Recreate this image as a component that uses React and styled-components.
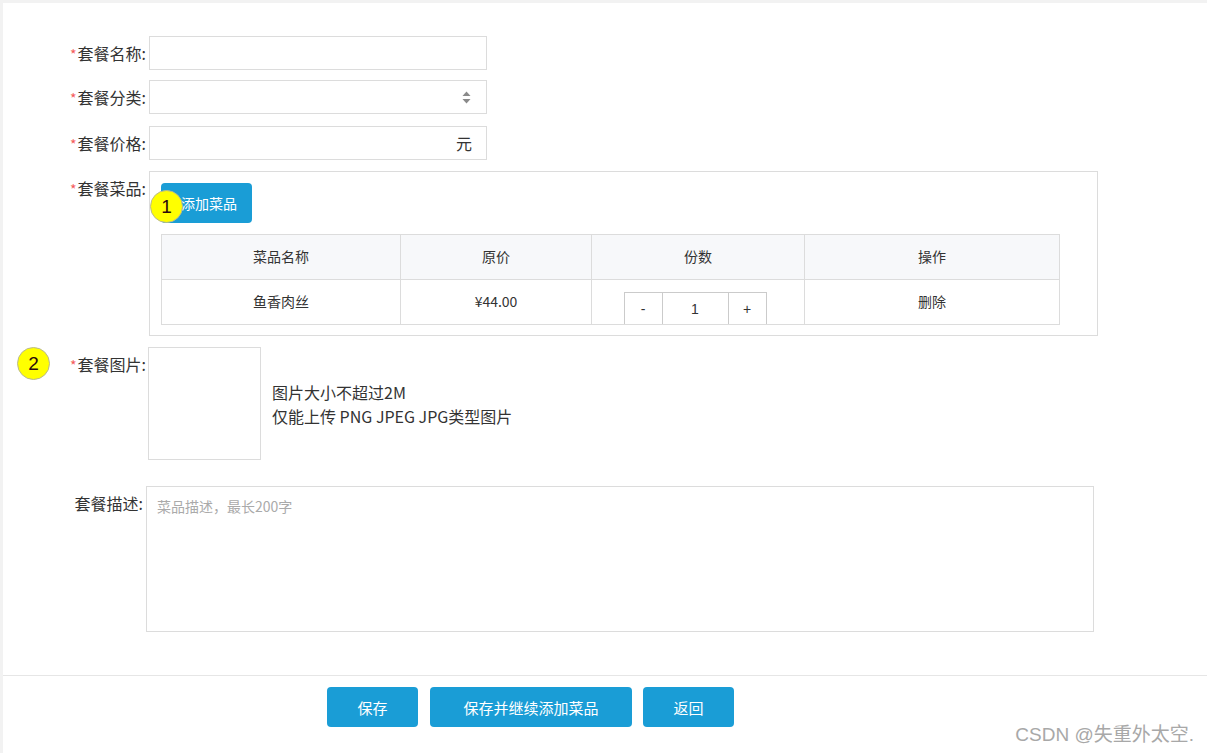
import React from "react";
import styled, { createGlobalStyle } from "styled-components";

const Global = createGlobalStyle`
  html, body { margin: 0; padding: 0; background: #f2f2f2; }
  body { font-family: "Noto Sans CJK SC", "Microsoft YaHei", "Liberation Sans", sans-serif; color: #333; }
  * { box-sizing: border-box; }
`;

const Panel = styled.div`
  position: relative;
  margin: 3px 0 0 3px;
  background: #fff;
  height: 750px;
  display: flex;
  flex-direction: column;
`;

const Form = styled.div`
  padding-top: 33px;
  flex: 1;
  display: flex;
  flex-direction: column;
`;

const Row = styled.div`
  position: relative;
  display: flex;
  align-items: flex-start;
  margin-bottom: ${(p) => p.$mb || 0}px;
`;

const Label = styled.label`
  width: ${(p) => p.$w || 143}px;
  margin-right: ${(p) => p.$gap || 3}px;
  text-align: right;
  font-size: 16px;
  line-height: 34px;
  height: 34px;
  color: #333;
  white-space: nowrap;
  flex-shrink: 0;
`;

const Star = styled.span`
  color: #f45b5b;
  font-size: 14px;
  margin-right: 1px;
`;

const InputBox = styled.div`
  width: 338px;
  height: 34px;
  border: 1px solid #dcdcdc;
  background: #fff;
  display: flex;
  align-items: center;
  justify-content: flex-end;
  padding-right: ${(p) => p.$pr || 14}px;
  font-size: 16px;
  color: #333;
`;

const DishesBox = styled.div`
  position: relative;
  width: 949px;
  height: 165px;
  border: 1px solid #dcdcdc;
  padding: 11px 0 0 11px;
`;

const BlueButton = styled.button`
  height: 40px;
  width: ${(p) => p.$w || 91}px;
  margin-left: ${(p) => p.$ml || 0}px;
  border: none;
  border-radius: 4px;
  background: #1a9dd6;
  color: #fff;
  font-family: inherit;
  font-size: 15px;
  padding: 0;
  cursor: pointer;
`;

const AddButton = styled(BlueButton)`
  font-size: 14px;
  padding-left: 5px;
`;

const Table = styled.table`
  margin-top: 11px;
  width: 899px;
  border-collapse: collapse;
  font-size: 14px;
  color: #333;
`;

const Th = styled.th`
  background: #f7f8fa;
  border: 1px solid #dcdcdc;
  height: 45px;
  font-weight: normal;
  width: ${(p) => p.$w}px;
  padding: 0 0 3px;
`;

const Td = styled.td`
  border: 1px solid #dcdcdc;
  height: 45px;
  text-align: center;
  padding: ${(p) => (p.$bottom ? "0" : "0 0 3px")};
  vertical-align: ${(p) => (p.$bottom ? "bottom" : "middle")};
`;

const Stepper = styled.div`
  display: inline-flex;
  height: 32px;
  border: 1px solid #cbcbcb;
  border-bottom: none;
  margin-left: -6px;
  vertical-align: bottom;
`;

const StepCell = styled.div`
  width: ${(p) => p.$w}px;
  display: flex;
  align-items: center;
  justify-content: center;
  font-size: 14px;
  color: #333;
  border-left: ${(p) => (p.$first ? "none" : "1px solid #cbcbcb")};
  font-family: "Liberation Sans", sans-serif;
`;

const Badge = styled.div`
  position: absolute;
  left: ${(p) => p.$x}px;
  top: ${(p) => p.$y}px;
  width: 33px;
  height: 33px;
  border-radius: 50%;
  background: #ffff00;
  border: 1px solid #b9b98f;
  display: flex;
  align-items: center;
  justify-content: center;
  font-family: "Liberation Sans", Arial, sans-serif;
  font-size: 19px;
  color: #2a0a0a;
`;

const UploadArea = styled.div`
  display: flex;
  align-items: center;
  gap: 11px;
`;

const UploadBox = styled.div`
  width: 113px;
  height: 113px;
  border: 1px solid #dcdcdc;
`;

const Hint = styled.div`
  font-size: 16px;
  line-height: 24px;
  color: #333;
`;

const TextArea = styled.div`
  width: 948px;
  height: 146px;
  border: 1px solid #dcdcdc;
  padding: 9px 10px;
  font-size: 14px;
  color: #aaa;
`;

const Footer = styled.div`
  border-top: 1px solid #e6e6e6;
  height: 78px;
  display: flex;
  gap: 12px;
  padding: 11px 0 0 324px;
`;

const Watermark = styled.div`
  position: absolute;
  right: 13px;
  bottom: 7px;
  font-family: "Liberation Sans", "Noto Sans CJK SC", sans-serif;
  font-size: 19px;
  color: #a8a8a8;
`;

const SelectArrow = () => (
  <svg width="9" height="13" viewBox="0 0 9 13">
    <path d="M4.5 0.5 L8.5 5 L0.5 5 Z" fill="#8a8a8a" />
    <path d="M4.5 12.5 L8.5 8 L0.5 8 Z" fill="#8a8a8a" />
  </svg>
);

const Req = ({ children }) => (
  <>
    <Star>*</Star>
    {children}
  </>
);

export default function App() {
  return (
    <>
      <Global />
      <Panel>
        <Form>
          <Row $mb={10}>
            <Label><Req>套餐名称:</Req></Label>
            <InputBox />
          </Row>
          <Row $mb={12}>
            <Label><Req>套餐分类:</Req></Label>
            <InputBox $pr={15}>
              <SelectArrow />
            </InputBox>
          </Row>
          <Row $mb={11}>
            <Label><Req>套餐价格:</Req></Label>
            <InputBox>元</InputBox>
          </Row>
          <Row $mb={11}>
            <Label><Req>套餐菜品:</Req></Label>
            <DishesBox>
              <AddButton>添加菜品</AddButton>
              <Badge $x={0} $y={18}>1</Badge>
              <Table>
                <thead>
                  <tr>
                    <Th $w={239}>菜品名称</Th>
                    <Th $w={191}>原价</Th>
                    <Th $w={213}>份数</Th>
                    <Th>操作</Th>
                  </tr>
                </thead>
                <tbody>
                  <tr>
                    <Td>鱼香肉丝</Td>
                    <Td>¥44.00</Td>
                    <Td $bottom>
                      <Stepper>
                        <StepCell $first $w={37}>-</StepCell>
                        <StepCell $w={66}>1</StepCell>
                        <StepCell $w={38}>+</StepCell>
                      </Stepper>
                    </Td>
                    <Td>删除</Td>
                  </tr>
                </tbody>
              </Table>
            </DishesBox>
          </Row>
          <Row $mb={26}>
            <Badge $x={14} $y={0}>2</Badge>
            <Label $w={143} $gap={2}><Req>套餐图片:</Req></Label>
            <UploadArea>
              <UploadBox />
              <Hint>
                图片大小不超过2M
                <br />
                仅能上传 PNG JPEG JPG类型图片
              </Hint>
            </UploadArea>
          </Row>
          <Row>
            <Label $w={140} $gap={3}>套餐描述:</Label>
            <TextArea>菜品描述，最长200字</TextArea>
          </Row>
        </Form>
        <Footer>
          <BlueButton $w={91}>保存</BlueButton>
          <BlueButton $w={202}>保存并继续添加菜品</BlueButton>
          <BlueButton $w={91} $ml={-1}>返回</BlueButton>
        </Footer>
        <Watermark>CSDN @失重外太空.</Watermark>
      </Panel>
    </>
  );
}
